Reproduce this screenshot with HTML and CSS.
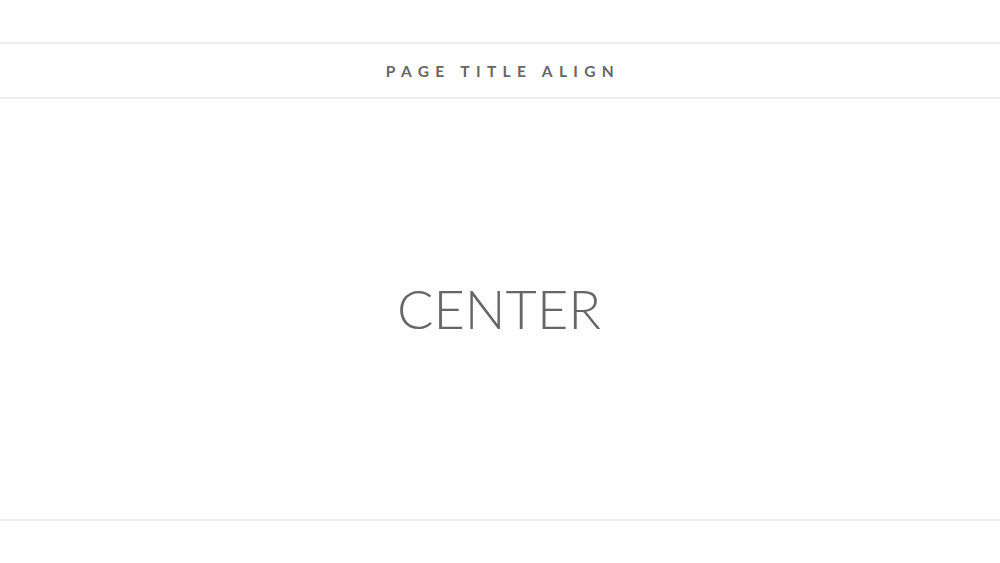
FILE: index.html
```html
<!DOCTYPE html>
<html>
<head>
<meta charset="utf-8">
<link rel="stylesheet" href="styles.css">
</head>
<body>
  <div class="top-space"></div>
  <header class="title-bar">
    <h1 class="page-title">PAGE TITLE ALIGN</h1>
  </header>
  <main class="hero">
    <div class="hero-text">CENTER</div>
  </main>
  <div class="bottom-space"></div>
</body>
</html>
```

FILE: styles.css
```css
html, body {
  margin: 0;
  padding: 0;
  background: #ffffff;
}
body {
  font-family: "Lato", "Liberation Sans", sans-serif;
  color: #666666;
  width: 1000px;
  height: 563px;
  overflow: hidden;
}
.top-space {
  height: 42px;
}
.title-bar {
  border-top: 2px solid #eeeeee;
  border-bottom: 2px solid #eeeeee;
  height: 53px;
  display: flex;
  align-items: center;
  justify-content: center;
  background: #ffffff;
}
.page-title {
  margin: 0;
  font-size: 15.5px;
  font-weight: 700;
  letter-spacing: 6.35px;
  color: #666666;
  padding-left: 6px;
}
.hero {
  height: 420px;
  border-bottom: 2px solid #eeeeee;
  background: #fefefe;
  display: flex;
  align-items: center;
  justify-content: center;
}
.hero-text {
  font-size: 54px;
  font-weight: 300;
  color: #666666;
  margin-top: -1px;
  margin-left: -2px;
}
```
